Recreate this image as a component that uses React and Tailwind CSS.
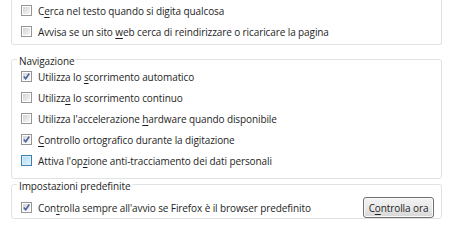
import React from "react";

const font = { fontFamily: '"Open Sans", "Noto Sans", sans-serif' };

function Box({ state }) {
  if (state === "focus") {
    return (
      <span className="w-[11px] h-[11px] border border-[#3c7fb1] bg-[#def0fa] p-[1px] flex shrink-0">
        <span className="flex-1 bg-gradient-to-br from-[#b3dbf4] to-[#dff1fb]" />
      </span>
    );
  }
  return (
    <span className="w-[11px] h-[11px] border border-[#959595] bg-white p-[1px] flex shrink-0 relative">
      <span className="flex-1 bg-gradient-to-br from-[#d3d3d3] to-[#f7f7f7]" />
      {state === "checked" && (
        <svg className="absolute left-0 top-0" width="9" height="9" viewBox="0 0 9 9">
          <path d="M1.8 4.4 L3.7 6.7 L7.3 1.5" fill="none" stroke="#4a5fa0" strokeWidth="1.5" />
        </svg>
      )}
    </span>
  );
}

function Row({ state, children }) {
  return (
    <div className="h-[21px] flex items-center pl-[9px] gap-[6px]">
      <Box state={state} />
      <span className="text-[10px] tracking-[-0.1px] text-[#1e1e1e] whitespace-nowrap leading-none">{children}</span>
    </div>
  );
}

const U = ({ children }) => <span className="underline underline-offset-[1.5px]">{children}</span>;

function Legend({ children }) {
  return (
    <legend className="ml-[5px] px-[2px] text-[10px] tracking-[-0.1px] leading-[14px] text-[#1e1e1e]">
      <span className="relative top-[2px]">{children}</span>
    </legend>
  );
}

export default function App() {
  return (
    <div className="w-[450px] h-[220px] bg-white overflow-hidden" style={font}>
      <div className="ml-[11px] w-[431px] border border-t-0 border-[#dfe3e6] rounded-b-[3px] pb-[2px]">
        <Row state="off">C<U>e</U>rca nel testo quando si digita qualcosa</Row>
        <Row state="off">Avvisa se un sito <U>w</U>eb cerca di reindirizzare o ricaricare la pagina</Row>
      </div>
      <fieldset className="mt-[7px] ml-[11px] w-[431px] border border-[#dfe3e6] rounded-[3px] pb-[7px]">
        <Legend>Navigazione</Legend>
        <Row state="checked">Utilizza lo <U>s</U>corrimento automatico</Row>
        <Row state="off">Utilizz<U>a</U> lo scorrimento continuo</Row>
        <Row state="off">Utilizza l'accelerazione <U>h</U>ardware quando disponibile</Row>
        <Row state="checked"><U>C</U>ontrollo ortografico durante la digitazione</Row>
        <Row state="focus">Attiva l'op<U>z</U>ione anti-tracciamento dei dati personali</Row>
      </fieldset>
      <fieldset className="-mt-[2px] ml-[11px] w-[431px] border border-[#dfe3e6] rounded-[3px]">
        <Legend>Impostazioni predefinite</Legend>
        <div className="flex items-center justify-between pr-[7px] pt-[6px]">
          <Row state="checked">Con<U>t</U>rolla sempre all'avvio se Firefox è il browser predefinito</Row>
          <button className="w-[71px] h-[21px] border border-[#707070] rounded-[3px] bg-gradient-to-b from-[#f3f3f3] via-[#e9e9e9] to-[#d6d6d6] text-[10px] tracking-[-0.1px] text-[#1e1e1e] leading-none shadow-[inset_0_0_0_1px_#fbfbfb]">
            C<U>o</U>ntrolla ora
          </button>
        </div>
      </fieldset>
    </div>
  );
}
